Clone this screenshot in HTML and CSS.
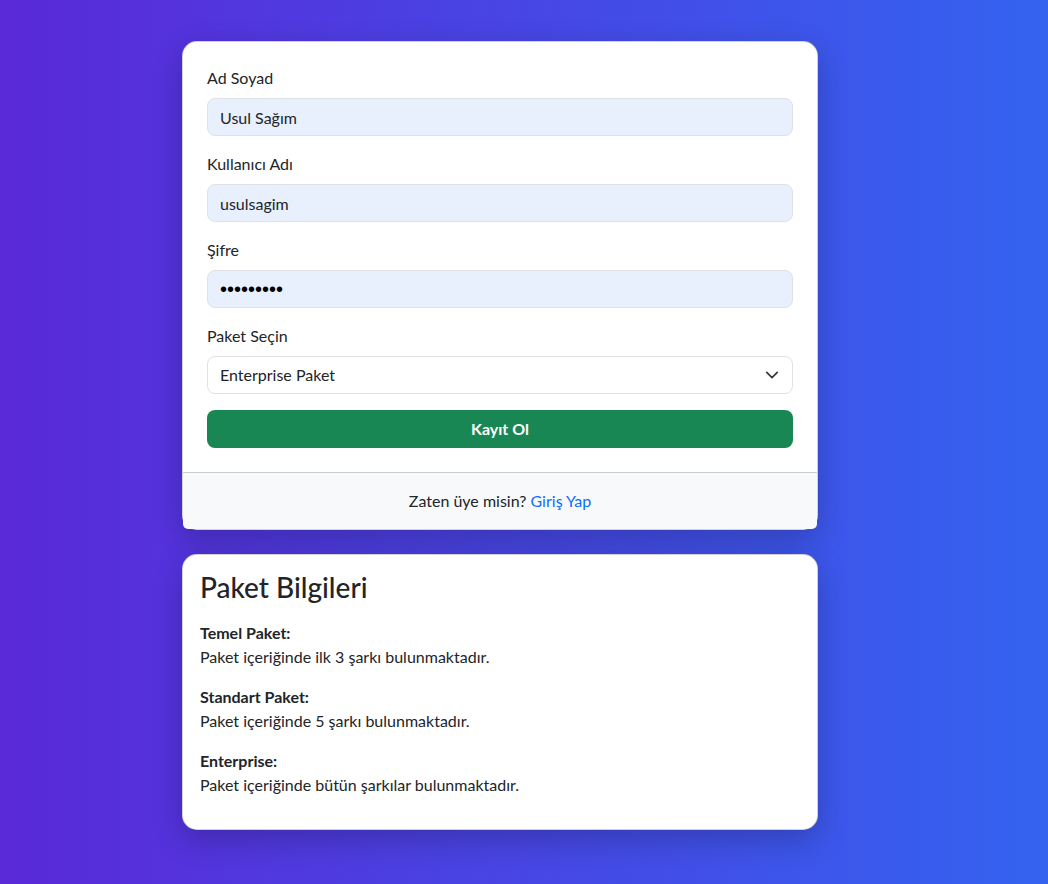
FILE: index.html
```html
<!DOCTYPE html>
<html lang="tr">
<head>
<meta charset="utf-8">
<title>Kayıt Ol</title>
<link rel="stylesheet" href="styles.css">
</head>
<body>
<main class="wrapper">
  <section class="card">
    <form class="card-body">
      <div class="field">
        <label class="label" for="ad">Ad Soyad</label>
        <input class="control filled" id="ad" type="text" value="Usul Sağım">
      </div>
      <div class="field">
        <label class="label" for="kullanici">Kullanıcı Adı</label>
        <input class="control filled" id="kullanici" type="text" value="usulsagim">
      </div>
      <div class="field">
        <label class="label" for="sifre">Şifre</label>
        <input class="control filled" id="sifre" type="password" value="123456789">
      </div>
      <div class="field">
        <label class="label" for="paket">Paket Seçin</label>
        <div class="select-wrap">
          <select class="control select" id="paket">
            <option>Temel Paket</option>
            <option>Standart Paket</option>
            <option selected>Enterprise Paket</option>
          </select>
          <svg class="chevron" width="16" height="16" viewBox="0 0 16 16" aria-hidden="true"><path d="m2 5 6 6 6-6" fill="none" stroke="#343a40" stroke-width="2" stroke-linecap="round" stroke-linejoin="round"/></svg>
        </div>
      </div>
      <button class="btn" type="button">Kayıt Ol</button>
    </form>
    <div class="card-footer">Zaten üye misin? <a href="#">Giriş Yap</a></div>
  </section>

  <section class="card info">
    <h3 class="info-title">Paket Bilgileri</h3>
    <p class="info-item"><strong>Temel Paket:</strong><br>Paket içeriğinde ilk 3 şarkı bulunmaktadır.</p>
    <p class="info-item"><strong>Standart Paket:</strong><br>Paket içeriğinde 5 şarkı bulunmaktadır.</p>
    <p class="info-item"><strong>Enterprise:</strong><br>Paket içeriğinde bütün şarkılar bulunmaktadır.</p>
  </section>
</main>
</body>
</html>
```

FILE: styles.css
```css
* { box-sizing: border-box; }

html, body { height: 100%; }

body {
  margin: 0;
  min-height: 884px;
  background: linear-gradient(to right, #5a29d8, #3463f0);
  font-family: Lato, "Noto Sans", sans-serif;
  font-size: 16px;
  line-height: 24px;
  color: #212529;
}

.wrapper {
  width: 636px;
  margin: 0 0 0 182px;
  padding-top: 41px;
}

.card {
  background: #fff;
  border: 1px solid rgba(0, 0, 0, 0.175);
  border-radius: 15px;
  box-shadow: 0 10px 30px rgba(0, 0, 0, 0.22);
}

.card-body {
  padding: 24px;
  margin: 0;
}

.field {
  margin-bottom: 16px;
}

.label {
  display: block;
  margin-bottom: 8px;
}

.control {
  display: block;
  width: 100%;
  height: 38px;
  padding: 6px 12px;
  font: inherit;
  color: #212529;
  background: #fff;
  border: 1px solid #dee2e6;
  border-radius: 8px;
  outline: none;
}

.control.filled {
  background: #e8f0fe;
}

#sifre {
  font-family: "Liberation Sans", sans-serif;
  font-size: 20px;
  color: #000;
  letter-spacing: 0;
  padding-top: 4px;
  padding-bottom: 4px;
  line-height: 28px;
}

.select-wrap {
  position: relative;
}

.select {
  appearance: none;
  -webkit-appearance: none;
  padding-right: 36px;
}

.chevron {
  position: absolute;
  right: 14px;
  top: 12px;
  width: 14px;
  height: 14px;
  pointer-events: none;
}

.btn {
  display: block;
  width: 100%;
  height: 38px;
  border: 0;
  border-radius: 8px;
  background: #198754;
  color: #fff;
  font: inherit;
  font-weight: 700;
}

.card-footer {
  padding: 16px 24px;
  background: #f8f9fa;
  border-top: 1px solid rgba(0, 0, 0, 0.175);
  border-radius: 0 0 5px 5px;
  text-align: center;
}

.card-footer a {
  color: #0d6efd;
  text-decoration: none;
}

.info {
  margin-top: 24px;
  padding: 16px 16px 16px 17px;
}

.info-title {
  margin: 0 0 16px;
  font-size: 28px;
  line-height: 1.2;
  font-weight: 500;
}

.info-item {
  margin: 0 0 16px;
}

.info-item strong {
  font-weight: 700;
}
```
